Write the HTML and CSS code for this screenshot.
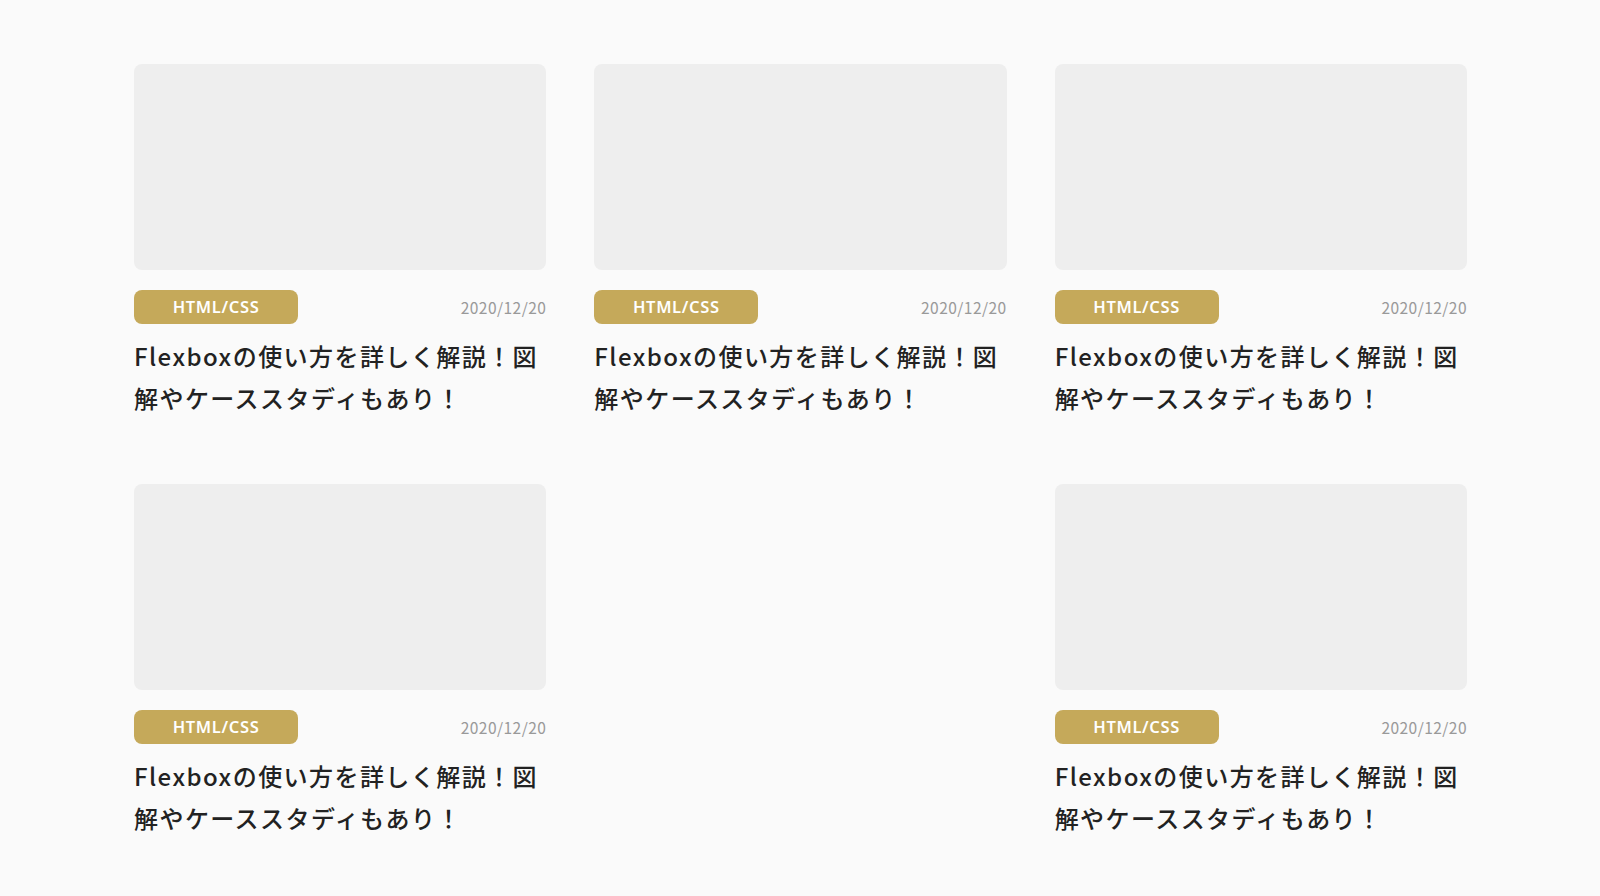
FILE: index.html
```html
<!DOCTYPE html>
<html lang="ja">
<head>
<meta charset="utf-8">
<title>Cards</title>
<link rel="stylesheet" href="styles.css">
</head>
<body>
<main class="grid">
  <article class="card">
    <div class="thumb"></div>
    <div class="meta"><span class="tag">HTML/CSS</span><time class="date">2020/12/20</time></div>
    <h2 class="title">Flexboxの使い方を詳しく解説！図解やケーススタディもあり！</h2>
  </article>
  <article class="card">
    <div class="thumb"></div>
    <div class="meta"><span class="tag">HTML/CSS</span><time class="date">2020/12/20</time></div>
    <h2 class="title">Flexboxの使い方を詳しく解説！図解やケーススタディもあり！</h2>
  </article>
  <article class="card">
    <div class="thumb"></div>
    <div class="meta"><span class="tag">HTML/CSS</span><time class="date">2020/12/20</time></div>
    <h2 class="title">Flexboxの使い方を詳しく解説！図解やケーススタディもあり！</h2>
  </article>
  <article class="card">
    <div class="thumb"></div>
    <div class="meta"><span class="tag">HTML/CSS</span><time class="date">2020/12/20</time></div>
    <h2 class="title">Flexboxの使い方を詳しく解説！図解やケーススタディもあり！</h2>
  </article>
  <div class="card empty"></div>
  <article class="card">
    <div class="thumb"></div>
    <div class="meta"><span class="tag">HTML/CSS</span><time class="date">2020/12/20</time></div>
    <h2 class="title">Flexboxの使い方を詳しく解説！図解やケーススタディもあり！</h2>
  </article>
</main>
</body>
</html>
```
FILE: styles.css
```css
* { box-sizing: border-box; }
html, body { margin: 0; padding: 0; }
body {
  background: #fafafa;
  font-family: "Noto Sans CJK JP", "Noto Sans", sans-serif;
  color: #222;
}
.grid {
  display: grid;
  grid-template-columns: repeat(3, 1fr);
  column-gap: 48px;
  row-gap: 65px;
  padding: 64px 133px 0 134px;
}
.card { display: flex; flex-direction: column; }
.thumb {
  height: 206px;
  background: #eeeeee;
  border-radius: 8px;
}
.meta {
  display: flex;
  justify-content: space-between;
  align-items: center;
  margin-top: 20px;
}
.tag {
  width: 164px;
  height: 34px;
  border-radius: 8px;
  background: #c5a95a;
  color: #fff;
  font-family: "Noto Sans", sans-serif;
  font-weight: 600;
  font-size: 16.5px;
  letter-spacing: 0.04em;
  line-height: 1;
  display: flex;
  align-items: center;
  justify-content: center;
}
.date {
  color: #999;
  font-size: 15.5px;
  font-family: "Noto Sans CJK JP", sans-serif;
  letter-spacing: 0.03em;
}
.title {
  margin: 11px 0 0;
  font-size: 24px;
  line-height: 42px;
  font-weight: 500;
  letter-spacing: 0.06em;
}
```
